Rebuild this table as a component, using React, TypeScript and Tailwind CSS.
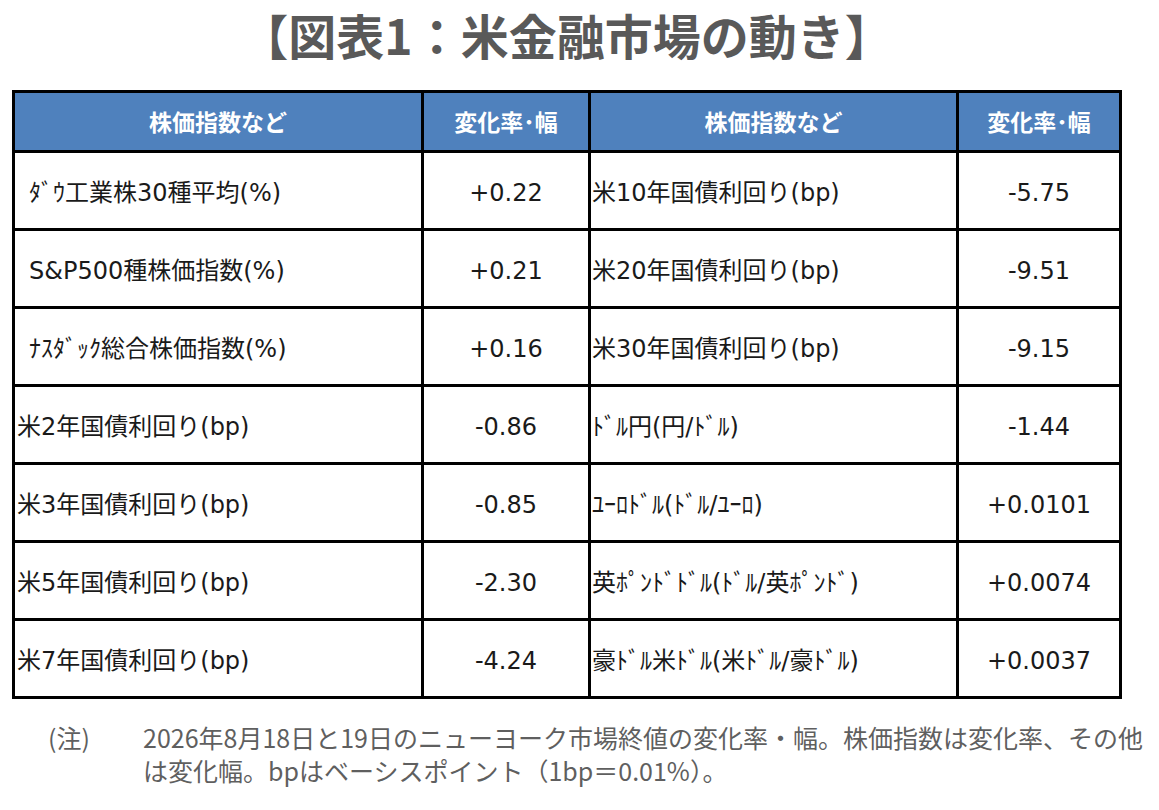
import React from 'react';

interface Row {
    leftName: string;
    leftValue: string;
    leftIndent?: boolean;
    rightName: string;
    rightValue: string;
}

const rows: Row[] = [
    { leftName: 'ﾀﾞｳ工業株30種平均(%)', leftValue: '+0.22', leftIndent: true, rightName: '米10年国債利回り(bp)', rightValue: '-5.75' },
    { leftName: 'S&P500種株価指数(%)', leftValue: '+0.21', leftIndent: true, rightName: '米20年国債利回り(bp)', rightValue: '-9.51' },
    { leftName: 'ﾅｽﾀﾞｯｸ総合株価指数(%)', leftValue: '+0.16', leftIndent: true, rightName: '米30年国債利回り(bp)', rightValue: '-9.15' },
    { leftName: '米2年国債利回り(bp)', leftValue: '-0.86', rightName: 'ﾄﾞﾙ円(円/ﾄﾞﾙ)', rightValue: '-1.44' },
    { leftName: '米3年国債利回り(bp)', leftValue: '-0.85', rightName: 'ﾕｰﾛﾄﾞﾙ(ﾄﾞﾙ/ﾕｰﾛ)', rightValue: '+0.0101' },
    { leftName: '米5年国債利回り(bp)', leftValue: '-2.30', rightName: '英ﾎﾟﾝﾄﾞﾄﾞﾙ(ﾄﾞﾙ/英ﾎﾟﾝﾄﾞ)', rightValue: '+0.0074' },
    { leftName: '米7年国債利回り(bp)', leftValue: '-4.24', rightName: '豪ﾄﾞﾙ米ﾄﾞﾙ(米ﾄﾞﾙ/豪ﾄﾞﾙ)', rightValue: '+0.0037' },
];

const headers = ['株価指数など', '変化率･幅', '株価指数など', '変化率･幅'];

export default function App() {
    return (
        <div className="w-[1159px] h-[810px] overflow-hidden bg-white font-['Noto_Sans_CJK_JP',sans-serif]">
            {/* Title */}
            <h1 className="pt-[6px] pr-[26px] text-center text-[48px] leading-[57px] font-bold text-[#595959]">
                【図表1：米金融市場の動き】
            </h1>

            {/* Table */}
            <div className="ml-[12px] mt-[27px] w-[1110px] grid grid-cols-[406px_164px_365px_160px] grid-rows-[57px_repeat(7,75px)] gap-[3px] p-[3px] bg-black">
                {headers.map((h, i) => (
                    <div
                        key={i}
                        className="bg-[#4f81bd] flex items-center justify-center text-white font-bold text-[23px]"
                    >
                        {h}
                    </div>
                ))}
                {rows.map((r, i) => (
                    <React.Fragment key={i}>
                        <div
                            className={`bg-white flex items-center pt-[4px] font-['DejaVu_Sans','Noto_Sans_CJK_JP',sans-serif] text-[24px] text-[#1a1a1a] ${r.leftIndent ? 'pl-[14px]' : 'pl-[2px]'}`}
                        >
                            {r.leftName}
                        </div>
                        <div className="bg-white flex items-center justify-center pt-[4px] font-['DejaVu_Sans',sans-serif] text-[24px] text-[#1a1a1a]">
                            {r.leftValue}
                        </div>
                        <div className="bg-white flex items-center pl-[1px] pt-[4px] font-['DejaVu_Sans','Noto_Sans_CJK_JP',sans-serif] text-[24px] text-[#1a1a1a]">
                            {r.rightName}
                        </div>
                        <div className="bg-white flex items-center justify-center pt-[4px] font-['DejaVu_Sans',sans-serif] text-[24px] text-[#1a1a1a]">
                            {r.rightValue}
                        </div>
                    </React.Fragment>
                ))}
            </div>

            {/* Note */}
            <div className="mt-[22px] flex text-[25px] leading-[33px] text-[#5f5f5f]">
                <div className="pl-[48px] w-[143px] shrink-0">(注)</div>
                <div className="w-[1010px]">
                    2026年8月18日と19日のニューヨーク市場終値の変化率・幅。株価指数は変化率、その他は変化幅。bpはベーシスポイント（1bp＝0.01%）。
                </div>
            </div>
        </div>
    );
}
